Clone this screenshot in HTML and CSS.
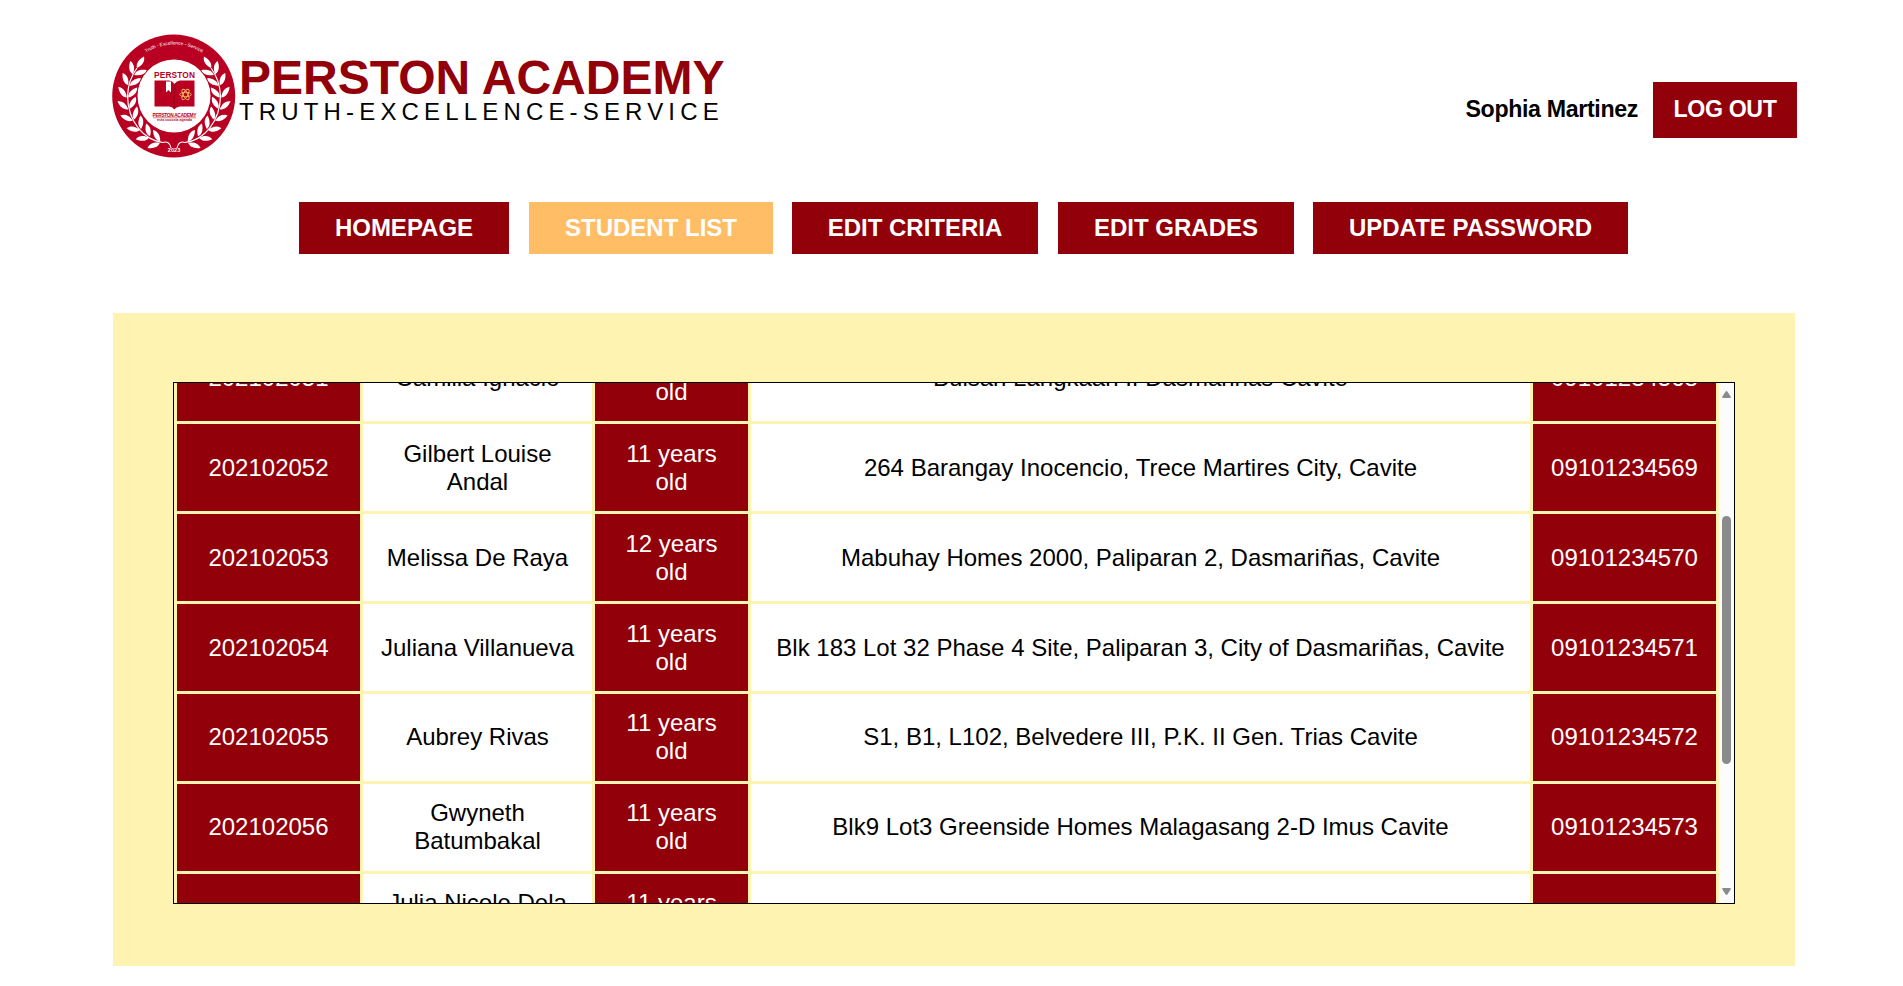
FILE: index.html
```
<!DOCTYPE html>
<html lang="en">
<head>
<meta charset="utf-8">
<title>Perston Academy - Student List</title>
<link rel="stylesheet" href="styles.css">
</head>
<body>
<header class="header">
  <div class="brand">
    <svg class="logo" viewBox="0 0 124 124" xmlns="http://www.w3.org/2000/svg">
      <defs>
        <path id="arc" d="M10.500 62a51.500 51.500 0 0 1 103 0"/>
        <path id="leaf" d="M0 0C1-4 5.500-6.500 12-6C10.500-1.500 6 .8 0 0Z"/>
        <g id="pair"><use href="#leaf" transform="translate(.8 0) rotate(-22)"/><use href="#leaf" transform="translate(-.8 0) rotate(-102)"/></g>
        <g id="branch">
          <path d="M59 114C58 109 55 107 51 108.500C32 106 16 88 15.500 62C16 50 19 42 25 34" fill="none" stroke="#fff" stroke-width="1.200"/>
          <use href="#pair" transform="translate(48 108) rotate(-74)"/>
          <use href="#pair" transform="translate(37.500 103) rotate(-58)"/>
          <use href="#pair" transform="translate(28.500 95.500) rotate(-44)"/>
          <use href="#pair" transform="translate(21.500 86) rotate(-30)"/>
          <use href="#pair" transform="translate(17 75) rotate(-15)"/>
          <use href="#pair" transform="translate(15.500 63.500) rotate(0)"/>
          <use href="#pair" transform="translate(17 51.500) rotate(14)"/>
          <use href="#pair" transform="translate(21.500 40.500) rotate(28)"/>
          <use href="#leaf" transform="translate(25 34) rotate(-32)"/>
        </g>
      </defs>
      <circle cx="61.700" cy="62" r="61.500" fill="#b90022"/>
      <circle cx="62" cy="62" r="36.500" fill="#fff"/>
      <g fill="#fff"><use href="#branch"/><use href="#branch" transform="matrix(-1 0 0 1 124 0)"/></g>
      <text class="logo-motto"><textPath href="#arc" startOffset="50%">Truth - Excellence - Service</textPath></text>
      <text class="logo-name" x="62.500" y="43.500" textLength="41">PERSTON</text>
      <path d="M42.500 46.500H57Q61 47 62.300 50Q64 47 68 46.500H82.500V72.500H68Q64 73 62.300 75.500Q61 73 57 72.500H42.500Z" fill="#b90022"/>
      <path d="M62.300 50V74" stroke="#8d0019" stroke-width=".8"/>
      <path d="M54 47.500h5v11l-2.500-2.500L54 58.500Z" fill="#fff"/>
      <g fill="none" stroke="#f5ba62" stroke-width=".9"><ellipse cx="73.500" cy="60.500" rx="5.800" ry="2.200"/><ellipse cx="73.500" cy="60.500" rx="5.800" ry="2.200" transform="rotate(60 73.500 60.500)"/><ellipse cx="73.500" cy="60.500" rx="5.800" ry="2.200" transform="rotate(120 73.500 60.500)"/></g>
      <text class="logo-small" x="62.500" y="82.800" textLength="44">PERSTON ACADEMY</text>
      <path d="M41 83.800H84" stroke="#b90022" stroke-width=".5"/>
      <text class="logo-sub" x="62.500" y="87.300" textLength="35">esta sucusta agenda</text>
      <text class="logo-year" x="62" y="118" textLength="12.500">2023</text>
    </svg>
    <div class="brand-text">
      <h1 class="title">PERSTON ACADEMY</h1>
      <p class="motto">TRUTH-EXCELLENCE-SERVICE</p>
    </div>
  </div>
  <div class="account">
    <span class="user">Sophia Martinez</span>
    <a class="logout">LOG OUT</a>
  </div>
</header>
<nav class="nav">
  <a class="nav-item w-home">HOMEPAGE</a>
  <a class="nav-item w-list active">STUDENT LIST</a>
  <a class="nav-item w-criteria">EDIT CRITERIA</a>
  <a class="nav-item w-grades">EDIT GRADES</a>
  <a class="nav-item w-password">UPDATE PASSWORD</a>
</nav>
<main class="panel">
  <div class="viewer">
    <div class="table">
      <div class="cell red">202102051</div><div class="cell">Camilla Ignacio</div><div class="cell red age">11 years old</div><div class="cell">Bulsan Langkaan II Dasmariñas Cavite</div><div class="cell red">09101234568</div>
      <div class="cell red">202102052</div><div class="cell">Gilbert Louise Andal</div><div class="cell red age">11 years old</div><div class="cell">264 Barangay Inocencio, Trece Martires City, Cavite</div><div class="cell red">09101234569</div>
      <div class="cell red">202102053</div><div class="cell">Melissa De Raya</div><div class="cell red age">12 years old</div><div class="cell">Mabuhay Homes 2000, Paliparan 2, Dasmariñas, Cavite</div><div class="cell red">09101234570</div>
      <div class="cell red">202102054</div><div class="cell">Juliana Villanueva</div><div class="cell red age">11 years old</div><div class="cell">Blk 183 Lot 32 Phase 4 Site, Paliparan 3, City of Dasmariñas, Cavite</div><div class="cell red">09101234571</div>
      <div class="cell red">202102055</div><div class="cell">Aubrey Rivas</div><div class="cell red age">11 years old</div><div class="cell">S1, B1, L102, Belvedere III, P.K. II Gen. Trias Cavite</div><div class="cell red">09101234572</div>
      <div class="cell red">202102056</div><div class="cell">Gwyneth Batumbakal</div><div class="cell red age">11 years old</div><div class="cell">Blk9 Lot3 Greenside Homes Malagasang 2-D Imus Cavite</div><div class="cell red">09101234573</div>
      <div class="cell red"></div><div class="cell">Julia Nicole Dela Cruz</div><div class="cell red age">11 years old</div><div class="cell"></div><div class="cell red"></div>
    </div>
    <div class="scrollbar">
      <svg class="arrow" viewBox="0 0 9 7"><path d="M4.500 0Q5 0 5.500 .8L8.800 5.800Q9 7 8 7H1Q0 7 .2 5.800L3.500 .8Q4 0 4.500 0Z"/></svg>
      <div class="thumb"></div>
      <svg class="arrow" viewBox="0 0 9 7"><path d="M4.500 7Q5 7 5.500 6.200L8.800 1.200Q9 0 8 0H1Q0 0 .2 1.200L3.500 6.200Q4 7 4.500 7Z"/></svg>
    </div>
  </div>
</main>
</body>
</html>
```
FILE: styles.css
```
* { box-sizing: border-box; }
body {
  margin: 0;
  height: 986px;
  overflow: hidden;
  background: #fff;
  color: #000;
  font-family: "Liberation Sans", Arial, sans-serif;
  font-size: 24px;
}
.header {
  display: flex;
  justify-content: space-between;
  height: 202px;
  padding: 34px 106px 0 112px;
}
.brand { display: flex; gap: 3px; }
.logo { width: 124px; height: 124px; }
.logo text { font-weight: bold; text-anchor: middle; fill: #b90022; }
.logo .logo-motto { font-size: 4.8px; font-weight: normal; fill: #fff; }
.logo .logo-name { font-size: 8.3px; }
.logo .logo-small { font-size: 4.8px; }
.logo .logo-sub { font-size: 3.6px; }
.logo .logo-year { font-size: 5.5px; fill: #fff; }
.brand-text { padding-top: 21px; }
.title {
  margin: 0;
  color: #92000a;
  font-size: 48px;
  line-height: 46px;
  white-space: nowrap;
}
.motto {
  margin: 0;
  letter-spacing: 5.16px;
  line-height: 22px;
  white-space: nowrap;
}
.account {
  display: flex;
  align-items: center;
  gap: 15px;
  height: 56px;
  margin-top: 48px;
  font-size: 23.2px;
  letter-spacing: -0.35px;
  font-weight: bold;
}
.user { line-height: 54px; padding-bottom: 2px; }
.logout {
  width: 144px;
  padding-bottom: 2px;
  background: #92000a;
  color: #fff;
  line-height: 54px;
  text-align: center;
}
.nav {
  display: flex;
  gap: 20px;
  height: 52px;
  padding-left: 299px;
}
.nav-item {
  background: #92000a;
  color: #fff;
  font-weight: bold;
  line-height: 52px;
  text-align: center;
  white-space: nowrap;
}
.nav-item.active { background: #ffbd66; }
.w-home { width: 210px; }
.w-list { width: 244px; }
.w-criteria { width: 246px; margin-left: -1px; }
.w-grades { width: 236px; }
.w-password { width: 315px; margin-left: -1px; }
.panel {
  width: 1682px;
  height: 653px;
  margin: 59px 0 0 113px;
  padding: 69px 60px 0;
  background: #fff3b2;
}
.viewer {
  display: flex;
  height: 522px;
  border: 1px solid #000;
  overflow: hidden;
}
.table {
  display: grid;
  grid-template-columns: 183px 229px 153px 779px 183px;
  grid-auto-rows: 87px;
  gap: 3px;
  width: 1545px;
  height: 627px;
  margin-top: -49px;
  padding: 0 3px;
}
.cell {
  display: flex;
  align-items: center;
  justify-content: center;
  padding: 0 15px;
  background: #fff;
  line-height: 28px;
  text-align: center;
}
.cell:nth-child(n + 21) { padding-bottom: 2px; }
.red { background: #92000a; color: #fff; }
.age { padding: 0 28px; }
.scrollbar {
  display: flex;
  flex-direction: column;
  justify-content: space-between;
  align-items: center;
  width: 15px;
  height: 520px;
  padding: 8px 3px;
  background: #fcfcfc;
}
.arrow { width: 9px; height: 7px; fill: #8b8b8b; }
.thumb {
  width: 9px;
  height: 248px;
  margin-bottom: 6px;
  border-radius: 5px;
  background: #8b8b8b;
}
```
